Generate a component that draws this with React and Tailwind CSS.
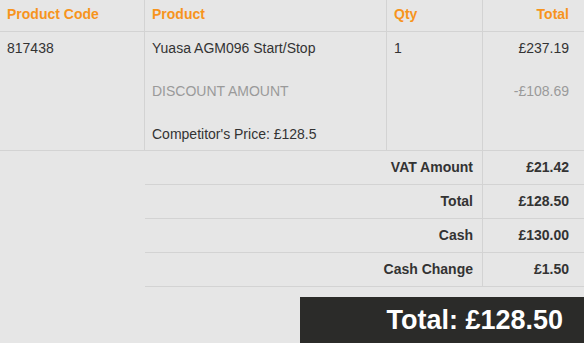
export default function App() {
  return (
    <div
      className="w-[584px] h-[343px] bg-[#e6e6e6] text-[#333333] overflow-hidden flex flex-col"
      style={{ fontFamily: '"Liberation Sans", Arial, sans-serif' }}
    >
      <div className="grid grid-cols-[145px_242px_96px_101px] h-[32px] border-b border-[#d3d3d3] text-[14px] font-bold text-[#f7941d] leading-[20px]">
        <div className="border-r border-[#d3d3d3] pl-[7px] pt-[4px]">Product Code</div>
        <div className="border-r border-[#d3d3d3] pl-[7px] pt-[4px]">Product</div>
        <div className="border-r border-[#d3d3d3] pl-[7px] pt-[4px]">Qty</div>
        <div className="pr-[15px] pt-[4px] text-right">Total</div>
      </div>
      <div className="grid grid-cols-[145px_242px_96px_101px] h-[119px] border-b border-[#d3d3d3] text-[14px] leading-[20px]">
        <div className="border-r border-[#d3d3d3] pl-[7px] pt-[6px]">817438</div>
        <div className="border-r border-[#d3d3d3] pl-[7px] pt-[6px] flex flex-col gap-[23px]">
          <div>Yuasa AGM096 Start/Stop</div>
          <div className="text-[#9a9a9a]">DISCOUNT AMOUNT</div>
          <div>Competitor's Price: £128.5</div>
        </div>
        <div className="border-r border-[#d3d3d3] pl-[7px] pt-[6px]">1</div>
        <div className="pr-[15px] pt-[6px] flex flex-col gap-[23px] text-right">
          <div>£237.19</div>
          <div className="text-[#9a9a9a]">-£108.69</div>
        </div>
      </div>
      <div className="ml-[145px] flex flex-col text-[14px] font-bold text-[#333333]">
        {[
          ["VAT Amount", "£21.42"],
          ["Total", "£128.50"],
          ["Cash", "£130.00"],
          ["Cash Change", "£1.50"],
        ].map(([label, value]) => (
          <div
            key={label}
            className="grid grid-cols-[338px_101px] h-[34px] border-b border-[#d3d3d3]"
          >
            <div className="border-r border-[#d3d3d3] flex items-center justify-end pr-[9px]">
              {label}
            </div>
            <div className="flex items-center justify-end pr-[15px]">{value}</div>
          </div>
        ))}
      </div>
      <div className="mt-[10px] ml-[300px] h-[46px] bg-[#2b2b29] text-white font-bold text-[27px] flex items-center justify-end pr-[21px]">
        Total: £128.50
      </div>
    </div>
  );
}
